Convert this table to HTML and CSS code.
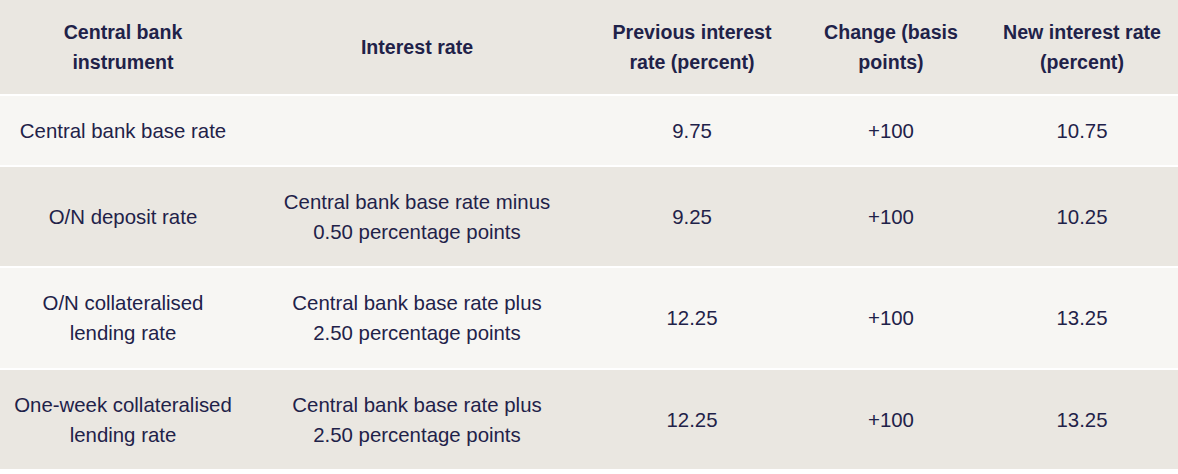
FILE: index.html
```html
<!DOCTYPE html>
<html>
<head>
<meta charset="utf-8">
<link rel="stylesheet" href="styles.css">
</head>
<body>
<table class="rates">
  <colgroup>
    <col class="c1"><col class="c2"><col class="c3"><col class="c4"><col class="c5">
  </colgroup>
  <thead>
    <tr class="head">
      <th>Central bank<br>instrument</th>
      <th>Interest rate</th>
      <th>Previous interest<br>rate (percent)</th>
      <th>Change (basis<br>points)</th>
      <th>New interest rate<br>(percent)</th>
    </tr>
  </thead>
  <tbody>
    <tr class="light r1">
      <td>Central bank base rate</td>
      <td></td>
      <td>9.75</td>
      <td>+100</td>
      <td>10.75</td>
    </tr>
    <tr class="dark r2">
      <td>O/N deposit rate</td>
      <td>Central bank base rate minus<br>0.50 percentage points</td>
      <td>9.25</td>
      <td>+100</td>
      <td>10.25</td>
    </tr>
    <tr class="light r3">
      <td>O/N collateralised<br>lending rate</td>
      <td>Central bank base rate plus<br>2.50 percentage points</td>
      <td>12.25</td>
      <td>+100</td>
      <td>13.25</td>
    </tr>
    <tr class="dark r4">
      <td>One-week collateralised<br>lending rate</td>
      <td>Central bank base rate plus<br>2.50 percentage points</td>
      <td>12.25</td>
      <td>+100</td>
      <td>13.25</td>
    </tr>
  </tbody>
</table>
</body>
</html>
```
FILE: styles.css
```css
html, body {
  margin: 0;
  padding: 0;
  background: #ffffff;
}
body {
  font-family: "Liberation Sans", Arial, sans-serif;
  color: #1f2249;
}
.rates {
  width: 1178px;
  border-collapse: collapse;
  table-layout: fixed;
}
.c1 { width: 246px; }
.c2 { width: 342px; }
.c3 { width: 208px; }
.c4 { width: 190px; }
.c5 { width: 192px; }
.rates th, .rates td {
  text-align: center;
  vertical-align: middle;
  line-height: 30px;
  padding: 0;
  border-bottom: 2px solid #ffffff;
}
.rates th {
  font-size: 19.6px;
  font-weight: bold;
  height: 94px;
  background: #eae7e1;
}
.rates td {
  font-size: 20.4px;
}
.light td { background: #f7f6f3; }
.dark td { background: #eae7e1; }
.r1 td { height: 69px; }
.r2 td { height: 99px; }
.r3 td { height: 100px; }
.r4 td { height: 99px; }
```
